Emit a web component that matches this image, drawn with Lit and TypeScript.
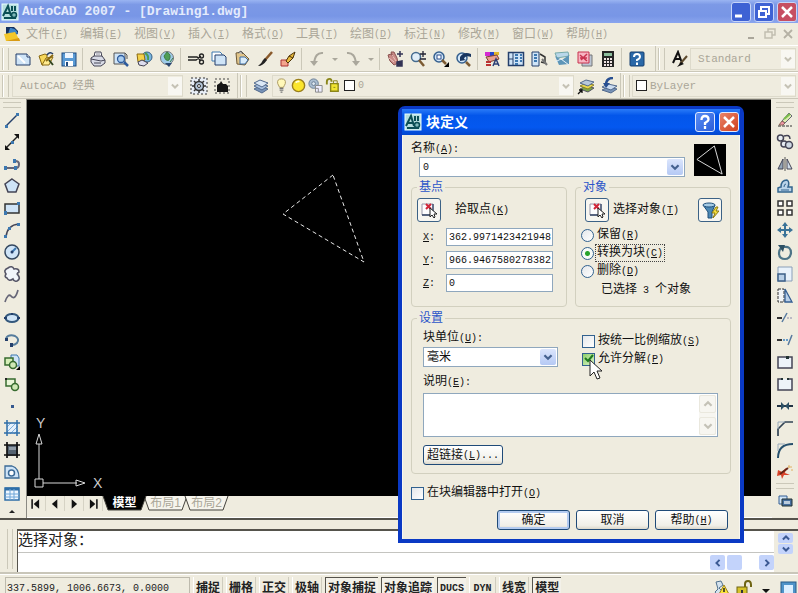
import { LitElement, html, svg, css, nothing, type TemplateResult, type SVGTemplateResult } from "lit";
import { customElement } from "lit/decorators.js";
import { classMap } from "lit/directives/class-map.js";

const N = "#243f6b"; // dark navy outline
const B = "#3d78b0"; // mid blue
const L = "#cfe4f7"; // pale blue fill

const icons: Record<string, SVGTemplateResult> = {
  logo: svg`<rect x="1" y="1" width="16" height="16" fill="#b6dede" stroke="#e9ffff"/><path d="M2 13L7 3L10 13M4 10H9M11 3V8M14 3V8M3 15H15" stroke="#0b4f55" stroke-width="2" fill="none"/><circle cx="13" cy="12" r="2.5" fill="#7fb9b9" stroke="#0b4f55" stroke-width="1.5"/>`,
  dwg: svg`<path d="M3 2H11L15 6V9L3 12Z" fill="#16315f"/><path d="M7 3C11 3 14 5 15 9L10 8L5 9Z" fill="#3e86c9"/><path d="M1 9L12 7L17 16H3Z" fill="#f3c72b"/><path d="M3 16H17L16 13Z" fill="#d89a14"/>`,
  newdoc: svg`<path d="M2 4H13L16 7V15H2Z" fill="${L}" stroke="${N}"/><path d="M13 4V7H16" fill="#fff" stroke="${N}"/><path d="M4 6L11 13" stroke="#fff" stroke-width="2"/>`,
  open: svg`<path d="M2 6L8 4L10 5V14L5 15Z" fill="#f6d75a" stroke="#8a6a12"/><path d="M5 15L9 8L16 7L12 15Z" fill="#ffeb8f" stroke="#8a6a12"/><path d="M10 5Q13 1 16 4" stroke="${N}" fill="none" stroke-width="1.5"/><path d="M9 11L16 5" stroke="#8a6a12" stroke-width="2"/><path d="M12 10L16 15" stroke="#31451f" stroke-width="2"/>`,
  save: svg`<rect x="2" y="3" width="14" height="13" fill="#5a9bd5" stroke="#1f4b80"/><rect x="5" y="3" width="8" height="5" fill="#eef6ff"/><rect x="5" y="11" width="8" height="5" fill="#fff"/><path d="M7 12V16" stroke="#1f4b80" stroke-width="2"/>`,
  print: svg`<path d="M5 7L6 2H12L13 7" fill="#fff" stroke="#445"/><path d="M2 8L5 6H13L16 10V13L12 16H5L2 12Z" fill="#d8dbe6" stroke="#445"/><path d="M2 9L12 11L16 10M5 13H12" stroke="#445" fill="none"/><path d="M7 4H11" stroke="#889"/>`,
  preview: svg`<path d="M2 3H13V14H2Z" fill="${L}" stroke="#555"/><path d="M13 3L15 5V9" stroke="#555" fill="none"/><circle cx="9" cy="9" r="3.5" fill="#a9cdf0" stroke="#2c5a9c" stroke-width="1.3"/><path d="M12 12L16 16" stroke="#2c5a9c" stroke-width="2.5"/>`,
  publish: svg`<circle cx="12" cy="7" r="5" fill="#79b6e0" stroke="#355f86"/><path d="M10 3Q14 5 13 10" stroke="#4a9d52" stroke-width="2" fill="none"/><path d="M2 4H9L10 10L3 12Z" fill="#f4d24b" stroke="#8a6a12"/><path d="M3 12L7 10L13 13L9 16L4 15Z" fill="#dde" stroke="#445"/>`,
  globe: svg`<circle cx="9" cy="8" r="6.5" fill="#9ecbe8" stroke="#777"/><path d="M9 2Q14 5 11 10Q8 12 6 6ZM12 12L15 8" fill="#4f9e55" stroke="#3e7c45"/><path d="M7 13H14L11 17Z" fill="#2c4770"/>`,
  cut: svg`<path d="M1 7H10L14 11M1 10L9 10L14 6" stroke="#222" stroke-width="1.4" fill="none"/><circle cx="14.500" cy="6" r="2" fill="none" stroke="#222" stroke-width="1.3"/><circle cx="14.500" cy="12" r="2" fill="none" stroke="#222" stroke-width="1.3"/>`,
  copy: svg`<path d="M2 2H10L12 4V11H2Z" fill="#fff" stroke="${B}"/><path d="M5 5H14L16 7V15H5Z" fill="${L}" stroke="${N}"/>`,
  paste: svg`<path d="M3 3L9 2L16 9L12 15L4 14Z" fill="#e0c489" stroke="#6f5a36"/><path d="M7 7H12L15 10L12 14H7Z" fill="#d9ecfb" stroke="#3e6da2"/><path d="M5 3L8 1L10 4" fill="#bbb" stroke="#555"/>`,
  brush: svg`<path d="M16 2L9 10" stroke="#8a5a2b" stroke-width="2.500"/><path d="M9 8L11 10Q7 16 2 16Q6 13 7 10Z" fill="#222"/>`,
  block: svg`<path d="M2 10H9V16H2Z" fill="#f3a48c" stroke="#a33"/><path d="M7 11L10 6L16 2L14 8L9 13Z" fill="#e7b93c" stroke="#4c3308"/><path d="M10 6L14 8" stroke="#4c3308"/>`,
  undo: svg`<path d="M15 3Q7 2 6 14" stroke="#aaa79c" stroke-width="2" fill="none"/><path d="M2 11H10L6 16Z" fill="#aaa79c"/>`,
  redo: svg`<path d="M3 3Q11 2 12 14" stroke="#aaa79c" stroke-width="2" fill="none"/><path d="M8 11H16L12 16Z" fill="#aaa79c"/>`,
  pan: svg`<path d="M2 5L5 4L7 7L5 2L8 2L11 8L12 13L8 15L4 11Z" fill="#c98a86" stroke="#8b5250"/><path d="M3 8L8 12M6 5L10 11" stroke="#f0c4bf"/><path d="M14 1V7M11 4H17M11 12L16 11V16H11Z" stroke="#335" fill="#335" stroke-width="1.5"/>`,
  zoomrt: svg`<circle cx="7" cy="7" r="4.500" fill="#e1eef8" stroke="#456b8f" stroke-width="1.500"/><path d="M10 10L15 16" stroke="#7c5b33" stroke-width="2.500"/><path d="M14 1V7M11 4H17M11 9H17" stroke="#223" stroke-width="1.300"/>`,
  zoomwin: svg`<circle cx="7" cy="7" r="5" fill="#d4e7f8" stroke="#35608f" stroke-width="1.500"/><rect x="5" y="5" width="4" height="4" fill="#fff" stroke="#2d4f8c"/><path d="M10 10L14 14" stroke="#7c5b33" stroke-width="2.500"/><path d="M17 12V17H12Z" fill="#000"/>`,
  zoomprev: svg`<circle cx="7" cy="8" r="5" fill="#d4e7f8" stroke="#35608f" stroke-width="1.500"/><path d="M11 12L15 16" stroke="#7c5b33" stroke-width="2.500"/><path d="M5 7Q9 1 16 4V7Q10 5 9 9L11 10L5 11Z" fill="#18355f"/>`,
  props: svg`<path d="M1 2H6V6H1Z" fill="#d52ad1"/><path d="M6 2H10V6H6Z" fill="#2346cf"/><path d="M10 2H15V5H10Z" fill="#e0b72b"/><path d="M2 7L13 5L15 9L5 12Z" fill="#e7a18f" stroke="#7b3e34"/><path d="M2 12H7M2 15H7" stroke="#b33" stroke-width="2"/><path d="M9 16L12 9L15 16M10 14H14" stroke="#2b3e75" stroke-width="1.500" fill="none"/>`,
  dcenter: svg`<rect x="1.500" y="2.500" width="15" height="13" fill="${L}" stroke="${N}" stroke-width="1.500"/><path d="M6 3V15M1 9H6" stroke="${N}"/><path d="M8 5H11M13 5H15M8 8H11M13 8H15M8 11H11M13 11H15M8 14H11" stroke="${B}" stroke-width="2"/>`,
  palettes: svg`<path d="M2 2H9V16H2Z" fill="${L}" stroke="${N}"/><path d="M4 5H7M4 8H7M4 11H7" stroke="${B}" stroke-width="2"/><path d="M10 4L15 7V13L11 12" stroke="#333" stroke-width="1.500" fill="none"/><path d="M12 9L17 15" stroke="#777" stroke-width="2"/>`,
  sheetset: svg`<path d="M2 3L15 2L16 6L4 8Z" fill="#b9d7ea" stroke="#7aa"/><path d="M2 6L9 10L16 5V14L6 15Z" fill="#5d95b8"/><path d="M2 12L8 9L16 15" stroke="#e5f2fb" fill="none"/>`,
  markup: svg`<path d="M6 5H16V16H6Z" fill="#bbc5d4" stroke="#777"/><path d="M2 2H13V13H2Z" fill="#f7b5c2" stroke="#c8324e"/><path d="M4 5L11 11M11 4L5 10M4 8H11" stroke="#c8324e" stroke-width="1.500"/>`,
  calc: svg`<rect x="3" y="1" width="12" height="16" fill="#252525"/><rect x="5" y="3" width="8" height="3" fill="#8bbd9c"/><path d="M5 9H7M8 9H10M11 9H13M5 12H7M8 12H10M11 12H13M5 15H7M8 15H10M11 15H13" stroke="#f0e4e4" stroke-width="2"/>`,
  help: svg`<rect x="2" y="2" width="14" height="14" rx="1" fill="#2a68a8" stroke="#143e70"/><path d="M6 7Q6 4 9 4Q12 4 12 7Q12 8.500 9 10V11M9 12.500V15" stroke="#fff" stroke-width="2" fill="none"/>`,
  textstyle: svg`<path d="M3 13L8 2L12 13M5 9H11" stroke="#111" stroke-width="2" fill="none"/><path d="M17 6L10 14" stroke="#5d4a2e" stroke-width="2"/><path d="M11 12L7 17L14 14Z" fill="#111"/>`,
  gear: svg`<path d="M1 1H17V17H1Z" fill="#e7edf5" stroke="#333" stroke-dasharray="2 2"/><circle cx="9" cy="9" r="4.500" fill="#b5c6d9" stroke="#333" stroke-width="1.500"/><circle cx="9" cy="9" r="1.500" fill="#fff" stroke="#333"/><path d="M9 2V5M9 13V16M2 9H5M13 9H16M4 4L6 6M12 12L14 14M14 4L12 6M6 12L4 14" stroke="#333" stroke-width="1.500"/>`,
  workspace: svg`<path d="M2 2H16V16H2Z" fill="none" stroke="#444" stroke-dasharray="2 2"/><path d="M4 15V8L7 6L8 4L10 7H13L15 9V15Z" fill="#151515"/>`,
  layers: svg`<path d="M2 12L8 9L16 12L10 16Z" fill="#7894b8" stroke="#52698c"/><path d="M2 9L8 6L16 9L10 13Z" fill="#a7c0df" stroke="#52698c"/><path d="M2 6L8 3L16 6L10 10Z" fill="#dbe8f6" stroke="#52698c"/>`,
  layerset: svg`<path d="M3 12L9 9L17 11L11 15Z" fill="#7ba34b" stroke="#556"/><path d="M3 9L9 6L17 8L11 12Z" fill="#ead94b" stroke="#8a812b"/><path d="M3 6L9 3L17 5L11 9Z" fill="#b7c8dc" stroke="#52698c"/><path d="M1 17L5 13M2 13H5V16" stroke="#111" fill="none" stroke-width="1.300"/>`,
  layerprev: svg`<path d="M2 13L8 10L17 12L11 16Z" fill="#7894b8" stroke="#52698c"/><path d="M2 10L8 7L17 9L11 13Z" fill="#cbdcf0" stroke="#52698c"/><path d="M13 1Q6 1 6 8" stroke="#274f91" stroke-width="2.500" fill="none"/><path d="M3 6H10L6 11Z" fill="#274f91"/>`,
  bulb: svg`<path d="M9 2Q14 2 13 7Q12 9 11 11H7Q6 9 5 7Q4 2 9 2Z" fill="#fff8b8" stroke="#a8965c"/><path d="M7 12H11M7 14H11M8 16H10" stroke="#777" stroke-width="1.300"/>`,
  sun: svg`<circle cx="9" cy="9" r="6.500" fill="#fbe52c" stroke="#9a7f1c" stroke-width="1.500"/><path d="M6 6Q8 4 10 5" stroke="#fffde0" stroke-width="2" fill="none"/>`,
  vpfreeze: svg`<circle cx="7" cy="7" r="5" fill="#a9bccf" stroke="#6a7e96"/><circle cx="7" cy="7" r="2" fill="#dde7f0" stroke="#6a7e96"/><path d="M9 9H16V16H9Z" fill="#eef" stroke="#888"/><path d="M9 12H12V16" stroke="#888" fill="none"/>`,
  unlock: svg`<path d="M3 8V5Q3 2 6 2Q8 2 8 5" stroke="#8b861a" stroke-width="2" fill="none"/><path d="M7 7H15V15H7Z" fill="#f1e52f" stroke="#8b861a" stroke-width="1.500"/><path d="M10 7V4H14V8M10 11H12" stroke="#8b861a" fill="none"/>`,
  line: svg`<path d="M3 15L15 3" stroke="${N}" stroke-width="1.500"/><path d="M2 14H5V17H2ZM13 2H16V5H13Z" fill="${B}"/>`,
  xline: svg`<path d="M3 15L15 3" stroke="#222" stroke-width="1.500"/><path d="M2 12V17H7ZM16 6V1H11Z" fill="#111"/><rect x="8" y="8" width="3" height="3" fill="${B}"/>`,
  pline: svg`<path d="M2 13H13Q16 13 16 9Q16 6 12 6" stroke="#667" stroke-width="2" fill="none"/><path d="M1 11H4V15H1ZM11 11H14V15H11ZM10 4H13V8H10Z" fill="${B}"/>`,
  polygon: svg`<path d="M9 2L16 7L13 15H5L2 7Z" fill="${L}" stroke="#445" stroke-width="1.500"/>`,
  rect: svg`<path d="M2 5H16V14H2Z" fill="${L}" stroke="#333" stroke-width="1.500"/><path d="M1 12H4V16H1ZM14 3H17V6H14Z" fill="${B}"/>`,
  arc: svg`<path d="M3 16Q4 4 16 3" stroke="#445" stroke-width="1.500" fill="none"/><path d="M1 14H4V17H1ZM5 6H8V9H5ZM14 2H17V5H14Z" fill="${B}"/>`,
  circle: svg`<circle cx="9" cy="9" r="7" fill="${L}" stroke="#33475f" stroke-width="1.500"/><path d="M9 9L13 5" stroke="${B}" stroke-width="2"/><circle cx="9" cy="9" r="1.500" fill="${N}"/>`,
  cloud: svg`<path d="M5 3Q9 0 11 4Q16 3 16 7Q13 9 15 10Q18 14 14 16Q11 17 10 14Q6 17 4 13Q1 12 3 9Q0 5 5 3Z" fill="#f1f5fa" stroke="#556" stroke-width="1.600"/>`,
  spline: svg`<path d="M2 15Q5 6 8 9Q12 14 15 3" stroke="#667" stroke-width="1.700" fill="none"/>`,
  ellipse: svg`<ellipse cx="9" cy="9" rx="6.500" ry="4" fill="${L}" stroke="#34587c" stroke-width="2"/><path d="M1 8H4V10H1ZM14 8H17V10H14ZM8 4H10V6H8Z" fill="${N}"/>`,
  ellarc: svg`<path d="M3 7Q6 3 12 5Q17 8 14 12Q12 14 9 14" fill="none" stroke="#567c9c" stroke-width="2"/><path d="M2 7H5V10H2ZM7 12H10V16H7Z" fill="${N}"/>`,
  insblock: svg`<path d="M8 2H14L16 5V13H8Z" fill="${L}" stroke="${B}"/><path d="M2 5H10V12H2Z" fill="#d6efb8" stroke="#376b2f" stroke-width="1.500"/><circle cx="10" cy="12" r="3.500" fill="#cfe8b6" stroke="#376b2f" stroke-width="1.500"/><path d="M17 13V17H13Z" fill="#000"/>`,
  mkblock: svg`<path d="M3 4H12V11H3Z" fill="#eaf6d9" stroke="#376b2f" stroke-width="1.500"/><circle cx="12" cy="12" r="3.500" fill="#cfe8b6" stroke="#376b2f" stroke-width="1.500"/><path d="M2 3H4V5H2Z" fill="#222"/>`,
  point: svg`<rect x="8" y="8" width="3" height="3" fill="#35588f"/>`,
  hatch: svg`<path d="M4 4H15V15H4Z" fill="#e5f1fb"/><path d="M4 8L8 4M4 13L13 4M7 15L15 7M11 15L15 11" stroke="#7fb0e0"/><path d="M4 1V17M14 1V17M1 4H17M1 14H17" stroke="#2f6ea8" stroke-width="1.500"/>`,
  gradient: svg`<path d="M4 4H15V15H4Z" fill="#546270"/><path d="M6 6H13V9H6Z" fill="#8f9ba6"/><path d="M4 1V17M14 1V17M1 4H17M1 14H17" stroke="#111" stroke-width="1.700"/>`,
  region: svg`<path d="M2 3H9Q16 5 16 15H2Z" fill="${L}" stroke="#3c6b97" stroke-width="1.300"/><circle cx="8.500" cy="10" r="3" fill="#fff" stroke="#3c6b97" stroke-width="1.500"/>`,
  table: svg`<rect x="2" y="3" width="14" height="12" fill="#eff7ff" stroke="#2f6ea8" stroke-width="1.500"/><path d="M2 4H16" stroke="#2f6ea8" stroke-width="3"/><path d="M2 9H16M2 12H16M7 4V15M11 4V15" stroke="#6fa6d8"/>`,
  more: svg`<path d="M6 6L9 3L12 6Z" fill="#222"/>`,
  erase: svg`<path d="M2 15H16" stroke="#333" stroke-dasharray="3 1"/><path d="M6 10L13 2L16 5L9 12Z" fill="#dcecae" stroke="#667"/><path d="M6 10L9 12L7 14H3Z" fill="#f096a8" stroke="#865"/><path d="M8 8L14 3" stroke="#7bbd4a" stroke-width="2"/>`,
  copyobj: svg`<circle cx="4.500" cy="5" r="3" fill="#e7edf3" stroke="#445" stroke-width="1.500"/><path d="M8 3Q14 1 14 6" stroke="#445" stroke-width="1.500" fill="none"/><circle cx="8" cy="11" r="3" fill="#e7edf3" stroke="#445" stroke-width="1.500"/><circle cx="13" cy="12" r="3.500" fill="#cfd9e4" stroke="#445" stroke-width="1.500"/>`,
  mirror: svg`<path d="M7 4V14H2Z" fill="#93a5b8" stroke="#445"/><path d="M11 4V14H16Z" fill="#cfdbe8" stroke="#445"/><path d="M9 2V16" stroke="#555"/>`,
  offset: svg`<path d="M2 15V11Q4 10 5 10Q5 3 11 3Q14 5 12 10H16V15Z" fill="#b9d3e9" stroke="#33658f" stroke-width="1.500"/><path d="M5 13H13M8 10Q8 7 10 7" stroke="#33658f" fill="none"/>`,
  array: svg`<path d="M2 2H7V7H2ZM11 2H16V7H11ZM2 11H7V16H2ZM11 11H16V16H11Z" fill="#fff" stroke="#333" stroke-width="1.500"/>`,
  move: svg`<path d="M9 3V15M3 9H15" stroke="#3a7398" stroke-width="2"/><path d="M9 1L12 5H6ZM9 17L12 13H6ZM1 9L5 6V12ZM17 9L13 6V12Z" fill="#3a7398"/>`,
  rotate: svg`<path d="M8 4Q15 3 15 10Q14 16 9 16Q3 16 3 10Q3 7 5 5" stroke="#4d7487" stroke-width="2.200" fill="none"/><path d="M2 2H9L7 9Z" fill="#2d5064"/>`,
  scale: svg`<path d="M2 2H16V16H2Z" fill="#e9f2fb" stroke="#8a9fb8"/><path d="M2 9H9V16H2Z" fill="#b9d0e8" stroke="#3c5f87" stroke-width="1.500"/>`,
  stretch: svg`<path d="M2 2H8V15H2Z" fill="#f2f5f8" stroke="#333" stroke-dasharray="3 1"/><path d="M9 2L16 15H9Z" fill="#b9d0e8" stroke="#345f94" stroke-width="1.300"/>`,
  trim: svg`<path d="M1 9H6" stroke="#333" stroke-width="2"/><path d="M6 13L11 4" stroke="#56799f" stroke-width="1.500"/><path d="M11 9H17" stroke="#88a" stroke-dasharray="2 1"/>`,
  extend: svg`<path d="M1 9H6" stroke="#333" stroke-width="2"/><path d="M7 9H12" stroke="#3b82c4" stroke-width="1.500" stroke-dasharray="2 1"/><path d="M12 14L16 4" stroke="#56799f" stroke-width="1.500"/>`,
  breakpt: svg`<path d="M2 4H16V15H2Z" fill="#edf3f9" stroke="#445" stroke-width="1.500"/><path d="M10 3H13V6H10Z" fill="#233"/>`,
  brk: svg`<path d="M6 4H2V15H16V4H12" fill="#edf3f9" stroke="#445" stroke-width="1.500"/><path d="M5 3H7V5H5ZM11 3H13V5H11Z" fill="#233"/>`,
  join: svg`<path d="M1 9H17" stroke="#234" stroke-width="2"/><path d="M5 5L9 9L5 13ZM13 5L9 9L13 13Z" fill="#2d5064"/>`,
  chamfer: svg`<path d="M2 17V10L9 3H17" fill="none" stroke="#345" stroke-width="1.700"/><path d="M2 10V3H9" fill="none" stroke="#9ab"/>`,
  fillet: svg`<path d="M2 17Q2 3 17 3" fill="none" stroke="#26506d" stroke-width="2"/><path d="M2 10V3H9" fill="none" stroke="#9ab"/>`,
  explode: svg`<path d="M2 7L6 9L10 5L9 10L14 12L8 12L6 16L5 12L1 13Z" fill="#d8442a"/><path d="M4 11L12 5" stroke="#662214" stroke-width="2"/><path d="M13 2V5M12 4H16M15 7H17" stroke="#e0b060"/>`,
  order: svg`<path d="M3 4H11V12H3Z" fill="${L}" stroke="#345f94"/><path d="M6 7H16V14H6Z" fill="#466f9f" stroke="#233"/><path d="M8 9H14V12H8Z" fill="#bcd"/>`,
  pick: svg`<path d="M2 3H13V14H2Z" fill="#fdfdff" stroke="#99a"/><path d="M2 14H13V3" fill="none" stroke="#346" stroke-width="1.300"/><path d="M6 3L11 8M11 3L6 8" stroke="#d22638" stroke-width="2"/><path d="M10 7V16L12 14L14 17L15 16L14 13H17Z" fill="#fff" stroke="#222"/>`,
  filter: svg`<path d="M2 4L7 11V17H11V11L14 4Z" fill="#4c88b4" stroke="#1e4f7a"/><ellipse cx="8" cy="4" rx="6" ry="2" fill="#a5cbe5" stroke="#1e4f7a"/><path d="M15 6L11 12H14L12 17L18 10H15L17 6Z" fill="#f6e03b" stroke="#8b7a12"/>`,
  min: svg`<path d="M3 13H10" stroke="#fff" stroke-width="3"/>`,
  restore: svg`<path d="M6 7V4H14V11H11" stroke="#fff" fill="none" stroke-width="2"/><path d="M4 8H11V14H4Z" stroke="#fff" fill="none" stroke-width="2"/>`,
  close: svg`<path d="M4 4L14 14M14 4L4 14" stroke="#fff" stroke-width="2.500"/>`,
  question: svg`<path d="M5.500 7Q5.500 3 9 3Q12.500 3 12.500 6.500Q12.500 8 9 10V12M9 13V16" stroke="#fff" stroke-width="2.300" fill="none"/>`,
  gmin: svg`<path d="M5 13H11" stroke="#aaa69a" stroke-width="2"/>`,
  grestore: svg`<path d="M7 7V4H14V10H11M4 7H11V13H4Z" stroke="#c2beb1" fill="none" stroke-width="1.500"/>`,
  gclose: svg`<path d="M5 5L13 13M13 5L5 13" stroke="#b5b1a4" stroke-width="1.800"/>`,
  down: svg`<path d="M5 7L9 11L13 7" stroke="currentColor" stroke-width="2.500" fill="none"/>`,
  up: svg`<path d="M5 11L9 7L13 11" stroke="currentColor" stroke-width="2.500" fill="none"/>`,
  left: svg`<path d="M11 5L7 9L11 13" stroke="currentColor" stroke-width="2.500" fill="none"/>`,
  right: svg`<path d="M7 5L11 9L7 13" stroke="currentColor" stroke-width="2.500" fill="none"/>`,
  tri: svg`<path d="M6 8H12L9 11Z" fill="#aaa79c"/>`,
  first: svg`<path d="M4 3V15" stroke="#111" stroke-width="2"/><path d="M13 3V15L6 9Z" fill="#111"/>`,
  prev: svg`<path d="M12 3V15L5 9Z" fill="#111"/>`,
  next: svg`<path d="M6 3V15L13 9Z" fill="#111"/>`,
  last: svg`<path d="M14 3V15" stroke="#111" stroke-width="2"/><path d="M5 3V15L12 9Z" fill="#111"/>`,
  comm: svg`<path d="M3 2L8 1L10 5L6 8L9 11L5 16L2 12L5 9Z" fill="#d4e2ee" stroke="#50708e"/><path d="M11 5L17 16H5Z" fill="#fbe43a" stroke="#9a7f1c"/><path d="M11 8V12M11 13V15" stroke="#222" stroke-width="1.500"/>`,
  padlock: svg`<path d="M10 7V4Q10 1 13 1Q16 1 16 5V7" stroke="#6e6414" stroke-width="2" fill="none"/><rect x="2" y="7" width="10" height="9" fill="#d6c22a" stroke="#6e6414"/><path d="M7 10V13" stroke="#333" stroke-width="2"/>`,
  tray: svg`<path d="M5 9H13L9 13Z" fill="#111"/>`,
  clean: svg`<rect x="2" y="2" width="15" height="15" fill="#4f93c9" stroke="#285b87"/><rect x="5" y="5" width="9" height="9" fill="#dcefff"/>`,
};

const icon = (name: string) =>
  html`<svg class="ic" viewBox="0 0 18 18" aria-hidden="true">${icons[name]}</svg>`;

/** Caption followed by its underlined access key in brackets. */
const cap = (text: string, key: string, tail = "") =>
  html`${text}<span class="m">(<u>${key}</u>)${tail}</span>`;

const sheet = css`
  * { box-sizing: border-box; }
  button, input, textarea, select { font: inherit; color: inherit; margin: 0; padding: 0; border: 0; background: none; outline: 0; border-radius: 0; }
  button { display: flex; align-items: center; justify-content: center; flex: none; white-space: nowrap; }
  .ic { width: 18px; height: 18px; flex: none; display: block; }
  .m { font-family: "Liberation Mono", monospace; font-size: 10px; }
`;

@customElement("block-dialog")
export class BlockDialog extends LitElement {
  static styles = [sheet, css`
    :host { display: block; width: 346px; background: #efecdf; border: solid #0a39c4; border-width: 3px 4px 4px; border-radius: 7px 7px 0 0; color: #111; font-size: 12px; line-height: 15px; }
    .title { display: flex; align-items: center; gap: 4px; height: 26px; padding: 0 1px; background: linear-gradient(#2a7bf8, #0356ea 25%, #0458f0 70%, #0347cf); }
    .title h1 { flex: 1; margin: 0; font-size: 14px; font-weight: 700; color: #fff; }
    .title .ic { margin-left: 1px; }
    .cap { width: 20px; height: 20px; border: 1px solid #dfe9ff; border-radius: 3px; background: linear-gradient(135deg, #5a8ef5, #2a5cd8); }
    .title .cap .ic { margin: 0; }
    .cap.x { background: linear-gradient(135deg, #e98468, #cf3f1e); }
    .body { padding: 6px 8px 9px; border: solid #f8f7f0; border-width: 0 1px; }
    .name { display: flex; gap: 9px; padding-right: 5px; }
    .name > div { flex: 1; }
    .name label { display: block; }
    .combo { display: flex; height: 20px; margin-left: 8px; border: 1px solid #8fa7bd; background: #fff; align-items: center; padding: 1px; }
    .combo input { flex: 1; min-width: 0; padding-left: 2px; }
    .drop { width: 16px; height: 16px; background: linear-gradient(#dbe5fc, #b5c9f4); color: #44618f; border-radius: 2px; }
    .drop .ic { width: 16px; height: 16px; }
    .preview { width: 32px; height: 32px; margin-top: 3px; background: #000; flex: none; }
    fieldset { margin: 0; min-width: 0; border: 1px solid #d2d0bf; border-radius: 4px; padding: 0; }
    legend { margin-left: 5px; padding: 0 2px; line-height: 14px; height: 14px; color: #2b55c9; }
    .pair { display: grid; grid-template-columns: 1fr 1fr; gap: 8px; margin-top: 3px; }
    .base { padding: 4px 13px 14px 5px; }
    .row { display: flex; align-items: center; }
    .tool { width: 24px; height: 24px; border: 1px solid #3c6286; border-radius: 3px; background: #f7f6f1; }
    .base .row { gap: 14px; margin-bottom: 6px; }
    .coords { display: grid; grid-template-columns: 18px 1fr; gap: 5px; align-items: center; padding-left: 6px; }
    .field { width: 100%; height: 18px; border: 1px solid #8fa7bd; background: #fff; padding-left: 2px; font-family: "Liberation Mono", monospace; font-size: 10px; }
    .objs { padding: 4px 8px 0 5px; }
    .objs .row { gap: 4px; margin-bottom: 4px; padding-left: 4px; }
    .grow { flex: 1; }
    .opt { display: flex; align-items: center; height: 18px; gap: 2px; }
    .opt span.t { padding: 0 1px; line-height: 14px; }
    .opt .focus { outline: 1px dotted #444; }
    input[type="radio"], input[type="checkbox"] { appearance: none; width: 13px; height: 13px; flex: none; border: 1px solid #31618f; background: linear-gradient(135deg, #e4e7ea, #fff); }
    input[type="radio"] { border-radius: 50%; }
    input[type="radio"]:checked { background: radial-gradient(circle, #27a32b 0 2px, #f7fbf7 3px); }
    .objs p { margin: 1px 0 0; padding-left: 20px; line-height: 17px; }
    .setup { margin-top: 4px; }
    .inner { padding: 5px 12px 8px 11px; }
    .split { display: grid; grid-template-columns: 135px 1fr; gap: 24px; }
    .unit label { display: block; margin-bottom: 1px; }
    .sel { position: relative; height: 20px; }
    .sel select { appearance: none; width: 100%; height: 20px; border: 1px solid #8fa7bd; background: #fff; padding-left: 3px; }
    .sel .drop { position: absolute; right: 2px; top: 2px; pointer-events: none; }
    .checks { padding-top: 2px; white-space: nowrap; }
    .allow { position: relative; }
    .allow input:checked { background: linear-gradient(135deg, #8ed06b, #d9f3c6); }
    .tick { position: absolute; left: 2px; top: 4px; width: 10px; height: 10px; pointer-events: none; }
    .cursor { position: absolute; left: 7px; top: 9px; width: 14px; height: 22px; pointer-events: none; }
    .desc { display: block; margin: 6px 0 3px; }
    .memo { display: flex; height: 44px; border: 1px solid #8fa7bd; background: #fff; padding: 1px; }
    .memo textarea { flex: 1; resize: none; }
    .scroll { display: flex; flex-direction: column; justify-content: space-between; width: 17px; background: #f7f6f1; color: #c4c2b7; }
    .scroll button { height: 18px; border: 1px solid #eae8de; border-radius: 2px; }
    .scroll .ic { width: 16px; height: 16px; }
    .push { height: 20px; border: 1px solid #1f4a78; border-radius: 3px; background: linear-gradient(#fff, #f0efe8 80%, #dcd8cb); }
    .link { width: 80px; margin-top: 8px; }
    .bottom { margin-top: 10px; }
    .actions { display: flex; justify-content: flex-end; gap: 6px; margin-top: 8px; padding-right: 3px; }
    .actions .push { width: 73px; }
    .actions .def { box-shadow: inset 0 0 0 2px #b3cbf0; }
  `];

  private opt(text: string, key: string, on = false) {
    return html`<label class="opt"><input type="radio" name="mode" ?checked=${on}><span class=${classMap({ t: true, focus: on })}>${cap(text, key)}</span></label>`;
  }

  private coord(axis: string, value: string) {
    return html`<label class="m" for="c${axis}"><u>${axis}</u>:</label><input class="field" id="c${axis}" .value=${value}>`;
  }

  render() {
    return html`
      <div class="title">${icon("logo")}<h1>块定义</h1>
        <button class="cap" aria-label="帮助">${icon("question")}</button><button class="cap x" aria-label="关闭">${icon("close")}</button>
      </div>
      <div class="body">
        <div class="name">
          <div><label for="name">${cap("名称", "A", ":")}</label>
            <div class="combo"><input id="name" class="m" .value=${"0"}><button class="drop" aria-label="名称列表">${icon("down")}</button></div></div>
          <svg class="preview" viewBox="0 0 33 33"><path d="M21 2L3 16L29 31Z" fill="none" stroke="#ddd"/></svg>
        </div>
        <div class="pair">
          <fieldset><legend>基点</legend>
            <div class="base">
              <div class="row"><button class="tool" id="pick" aria-label="拾取点">${icon("pick")}</button><label for="pick">${cap("拾取点", "K")}</label></div>
              <div class="coords">${this.coord("X", "362.9971423421948")}${this.coord("Y", "966.9467580278382")}${this.coord("Z", "0")}</div>
            </div>
          </fieldset>
          <fieldset><legend>对象</legend>
            <div class="objs">
              <div class="row"><button class="tool" id="sel" aria-label="选择对象">${icon("pick")}</button><label class="grow" for="sel">${cap("选择对象", "T")}</label><button class="tool" aria-label="快速选择">${icon("filter")}</button></div>
              ${this.opt("保留", "R")}${this.opt("转换为块", "C", true)}${this.opt("删除", "D")}
              <p>已选择<span class="m"> 3 </span>个对象</p>
            </div>
          </fieldset>
        </div>
        <fieldset class="setup"><legend>设置</legend>
          <div class="inner">
            <div class="split">
              <div class="unit"><label for="unit">${cap("块单位", "U", ":")}</label>
                <div class="sel"><select id="unit"><option>毫米</option></select><span class="drop">${icon("down")}</span></div></div>
              <div class="checks">
                <label class="opt"><input type="checkbox"><span class="t">${cap("按统一比例缩放", "S")}</span></label>
                <label class="opt allow"><input type="checkbox" checked><svg class="tick" viewBox="0 0 10 10"><path d="M1 4L4 7L9 1" fill="none" stroke="#1c7a1f" stroke-width="2"/></svg><span class="t">${cap("允许分解", "P")}</span>
                  <svg class="cursor" viewBox="0 0 14 22"><path d="M1 1V17L5 13L8 20L11 19L8 12H13Z" fill="#fff" stroke="#222"/></svg></label>
              </div>
            </div>
            <label class="desc" for="desc">${cap("说明", "E", ":")}</label>
            <div class="memo"><textarea id="desc"></textarea><div class="scroll"><button aria-label="上">${icon("up")}</button><button aria-label="下">${icon("down")}</button></div></div>
            <button class="push link">${cap("超链接", "L", "...")}</button>
          </div>
        </fieldset>
        <label class="opt bottom"><input type="checkbox"><span class="t">${cap("在块编辑器中打开", "O")}</span></label>
        <div class="actions"><button class="push def">确定</button><button class="push">取消</button><button class="push">${cap("帮助", "H")}</button></div>
      </div>`;
  }
}

const MENUS: [string, string][] = [["文件", "F"], ["编辑", "E"], ["视图", "V"], ["插入", "I"], ["格式", "O"], ["工具", "T"], ["绘图", "D"], ["标注", "N"], ["修改", "M"], ["窗口", "W"], ["帮助", "H"]];
const STANDARD = "newdoc open save | print preview publish globe | cut copy paste brush block | undo tri redo tri | pan zoomrt zoomwin zoomprev | props dcenter palettes sheetset markup calc | help".split(" ");
const DRAW = "line xline pline polygon rect arc circle cloud spline ellipse ellarc insblock mkblock point hatch gradient region table more".split(" ");
const MODIFY = "erase copyobj mirror offset array move rotate scale stretch trim extend breakpt brk join chamfer fillet explode".split(" ");
const MODES: [string, boolean, boolean][] = [["捕捉", false, false], ["栅格", false, false], ["正交", false, false], ["极轴", false, false], ["对象捕捉", true, false], ["对象追踪", true, false], ["DUCS", true, true], ["DYN", false, true], ["线宽", false, false], ["模型", true, false]];

@customElement("app-root")
export class AppRoot extends LitElement {
  static styles = [sheet, css`
    :host { display: flex; flex-direction: column; position: relative; height: 100vh; overflow: hidden; background: #efecdf; color: #222; font: 12px/15px "Liberation Sans", "Noto Sans CJK SC", sans-serif; }
    .dlg { position: absolute; left: 398px; top: 106px; }
    .title { display: flex; align-items: center; gap: 3px; height: 23px; flex: none; padding: 0 1px; background: linear-gradient(#9ab4f2, #7c99e6 20%, #7896e6 70%, #8aa5ee); }
    .title h1 { flex: 1; margin: 0; font: 700 13px/20px "Liberation Mono", monospace; color: #e4ebfc; }
    .title button { width: 20px; height: 20px; border: 1px solid #c7d5f8; border-radius: 3px; background: #3e62d4; }
    .title .x { background: #c64f62; }
    .menu { display: flex; align-items: center; height: 22px; flex: none; padding: 0 1px 0 3px; color: #aaa698; text-shadow: 1px 1px #fff; }
    .menu nav { display: flex; flex: 1; gap: 12px; padding-left: 5px; }
    .menu button { min-width: 18px; }
    .menu nav button { width: 42px; }
    .bars { display: flex; align-items: center; height: 27px; flex: none; border-top: 1px solid #fff; border-bottom: 1px solid #cbc8b9; }
    .bar { display: flex; align-items: center; height: 25px; border-right: 1px solid #cbc8b9; padding-right: 4px; }
    .grip { width: 7px; height: 22px; margin: 0 2px; flex: none; border: solid #cbc8b9; border-width: 0 1px; box-shadow: inset 1px 0 #fff; }
    .tb { width: 23px; height: 23px; }
    .tb.tri { width: 13px; }
    .tb.tri .ic { margin: 0 -3px; }
    .sep { width: 6px; height: 22px; flex: none; border-left: 1px solid #cbc8b9; margin-left: 2px; margin-right: -2px; }
    .box { display: flex; align-items: center; flex: 1; min-width: 0; height: 22px; border: 1px solid #dddacb; color: #aaa698; position: relative; }
    .box .arrow { margin-left: auto; color: #c5c2b5; background: #f8f7f2; width: 14px; height: 18px; display: flex; align-items: center; justify-content: center; pointer-events: none; }
    .arrow .ic { width: 14px; height: 14px; flex: none; }
    .box select { appearance: none; position: absolute; inset: 0; width: 100%; padding-left: 7px; font-family: "Liberation Mono", "Noto Sans CJK SC", monospace; font-size: 11px; line-height: 18px; }
    .box select.sq { padding-left: 17px; }
    .sw { width: 11px; height: 11px; border: 1px solid #222; background: #fff; margin: 0 3px; flex: none; }
    .std { flex: none; width: 656px; }
    .fill { flex: 1; min-width: 0; border: 0; padding-right: 2px; }
    .ws { width: 238px; flex: none; }
    .ws .box { margin: 0 4px 0 1px; }
    .lay { width: 383px; flex: none; padding-right: 0; }
    .lay .box .ic { width: 17px; height: 17px; }
    .lay .box .arrow .ic { width: 14px; height: 14px; }
    .main { display: grid; grid-template-columns: 26px 1fr 26px; flex: 1; min-height: 0; }
    .side { display: flex; flex-direction: column; align-items: center; overflow: hidden; min-height: 0; padding: 3px 3px 0 0; }
    .side.r { padding: 3px 0 0; }
    .side button { width: 22px; height: 22px; }
    .vgrip { width: 18px; height: 6px; margin-bottom: 1px; flex: none; border: solid #cbc8b9; border-width: 1px 0; }
    .work { display: flex; flex-direction: column; min-width: 0; border-left: 1px solid #8b8a83; }
    .canvas { flex: 1; min-height: 0; position: relative; background: #000; border-top: 1px solid #77756e; margin-right: 1px; overflow: hidden; }
    .tri3 { position: absolute; left: 0; top: 0; width: 350px; height: 180px; }
    .ucs { position: absolute; left: 0; bottom: 0; width: 90px; height: 90px; }
    .tabs { display: flex; height: 22px; flex: none; border-bottom: 1px solid #fff; }
    .tabs > button { height: 15px; }
    .nav { width: 19px; border-right: 1px solid #d6d3c5; }
    .nav .ic { width: 14px; height: 14px; }
    .tab { position: relative; width: 45px; margin-right: -4px; color: #aaa698; z-index: 0; }
    .tab svg { position: absolute; inset: 0; width: 100%; height: 100%; z-index: -1; }
    .tab.on { color: #fff; font-weight: 700; margin-left: -1px; z-index: 1; }
    .cmd { display: grid; grid-template-columns: 17px 1fr 24px; flex: none; border-top: 2px solid #55534c; padding-top: 9px; border-bottom: 2px solid #c9c6b9; }
    .cgrip { width: 6px; height: 40px; margin-left: 7px; border: solid #cbc8b9; border-width: 0 1px; }
    .log { border-top: 2px solid #55534c; border-left: 1px solid #55534c; background: #fff; }
    .log p { margin: 0; height: 22px; font-size: 15px; line-height: 18px; border-bottom: 1px solid #c4c4c0; }
    .prompt { display: flex; align-items: center; height: 19px; }
    .prompt input { flex: 1; min-width: 0; }
    .sc { background: #c3d3fb; border-radius: 2px; color: #3c5a94; width: 15px; height: 15px; }
    .sc .ic { width: 14px; height: 14px; }
    .sc.thumb { margin: 0 17px 0 2px; }
    .vs { display: flex; flex-direction: column; gap: 1px; padding: 2px 0 0 4px; border-top: 2px solid #55534c; }
    .vs .sc { height: 10px; overflow: hidden; }
    .status { display: flex; height: 19px; flex: none; gap: 3px; padding: 2px 1px 0 5px; overflow: hidden; border-top: 1px solid #fff; }
    .status > * { height: 22px; flex: none; }
    .coordbox { width: 185px; border: 1px solid #bdbaad; padding: 3px 1px; }
    .mode { padding: 4px 2px 0; border-left: 1px solid #fff; border-right: 1px solid #cfccbe; align-items: flex-start; font-weight: 700; min-width: 29px; }
    .mode.n { min-width: 27px; }
    .mode.on { border: 1px solid #55534c; border-width: 1px 0 0 1px; background: #f3f1e9; padding-top: 3px; }
    .space { flex: 1 1 0; }
    .trayset { display: flex; gap: 4px; padding-top: 3px; }
  `];

  private tool(name: string) {
    if (name === "|") return html`<span class="sep"></span>`;
    return html`<button class="tb ${name === "tri" ? "tri" : ""}" aria-label=${name}>${icon(name)}</button>`;
  }

  private pick(value: string, label: string, swatch = false): TemplateResult {
    return html`<div class="box">${swatch ? html`<span class="sw"></span>` : nothing}<select class=${swatch ? "sq" : ""} aria-label=${label}><option>${value}</option></select><span class="arrow">${icon("down")}</span></div>`;
  }

  private tab(text: string, on = false) {
    return html`<button class=${classMap({ tab: true, on })}><svg viewBox="0 0 45 15" preserveAspectRatio="none"><path d="M1 0L6 14H39L44 0" fill=${on ? "#000" : "#f6f4ec"} stroke="#44423c"/></svg>${text}</button>`;
  }

  render() {
    return html`
      <header class="title">${icon("logo")}<h1>AutoCAD 2007 - [Drawing1.dwg]</h1>
        <button aria-label="最小化">${icon("min")}</button><button aria-label="还原">${icon("restore")}</button><button class="x" aria-label="关闭">${icon("close")}</button></header>
      <div class="menu">${icon("dwg")}<nav>${MENUS.map(([t, k]) => html`<button>${cap(t, k)}</button>`)}</nav>
        <button aria-label="最小化图形">${icon("gmin")}</button><button aria-label="还原图形">${icon("grestore")}</button><button aria-label="关闭图形">${icon("gclose")}</button></div>
      <div class="bars">
        <div class="bar std"><span class="grip"></span>${STANDARD.map((n) => this.tool(n))}</div>
        <div class="bar fill"><span class="grip"></span>${this.tool("textstyle")}${this.pick("Standard", "文字样式")}</div>
      </div>
      <div class="bars">
        <div class="bar ws"><span class="grip"></span>${this.pick("AutoCAD 经典", "工作空间")}${this.tool("gear")}${this.tool("workspace")}</div>
        <div class="bar lay"><span class="grip"></span>${this.tool("layers")}
          <div class="box">${["bulb", "sun", "vpfreeze", "unlock"].map(icon)}<span class="sw"></span><span class="m">0</span><span class="arrow">${icon("down")}</span></div>
          ${this.tool("layerset")}${this.tool("layerprev")}</div>
        <div class="bar fill"><span class="grip"></span>${this.pick("ByLayer", "颜色", true)}</div>
      </div>
      <main class="main">
        <div class="side"><span class="vgrip"></span>${DRAW.map((n) => this.tool(n))}</div>
        <div class="work">
          <div class="canvas">
            <svg class="tri3" viewBox="0 0 350 180"><path d="M306 75L256 114L337 162Z" fill="none" stroke="#e8e8e8" stroke-dasharray="4 3"/></svg>
            <svg class="ucs" viewBox="0 0 90 90"><path d="M8 73H16V81H8ZM12 73V38M16 77H50M12 28L9 38H15ZM58 77L49 74V80Z" fill="none" stroke="#d8d8d8"/><g fill="#ccc" font-family="Liberation Sans" font-size="14"><text x="9" y="22">Y</text><text x="66" y="82">X</text></g></svg>
          </div>
          <div class="tabs">${["first", "prev", "next", "last"].map((n) => html`<button class="nav" aria-label=${n}>${icon(n)}</button>`)}${this.tab("模型", true)}${this.tab("布局1")}${this.tab("布局2")}</div>
        </div>
        <div class="side r"><span class="vgrip"></span>${MODIFY.map((n) => this.tool(n))}<span class="vgrip"></span>${this.tool("order")}</div>
      </main>
      <section class="cmd">
        <span class="cgrip"></span>
        <div class="log"><p>选择对象：</p>
          <div class="prompt"><input aria-label="命令行"><button class="sc" aria-label="左">${icon("left")}</button><button class="sc thumb" aria-label="滚动"></button><button class="sc" aria-label="右">${icon("right")}</button></div></div>
        <div class="vs"><button class="sc" aria-label="上">${icon("up")}</button><button class="sc" aria-label="下">${icon("down")}</button></div>
      </section>
      <footer class="status"><span class="coordbox m">337.5899, 1006.6673, 0.0000</span>
        ${MODES.map(([t, on, mono]) => html`<button class=${classMap({ mode: true, on, m: mono, n: mono })}>${t}</button>`)}
        <span class="space"></span><span class="trayset">${["comm", "padlock", "tray", "clean"].map(icon)}</span></footer>
      <block-dialog class="dlg" role="dialog"></block-dialog>`;
  }
}
